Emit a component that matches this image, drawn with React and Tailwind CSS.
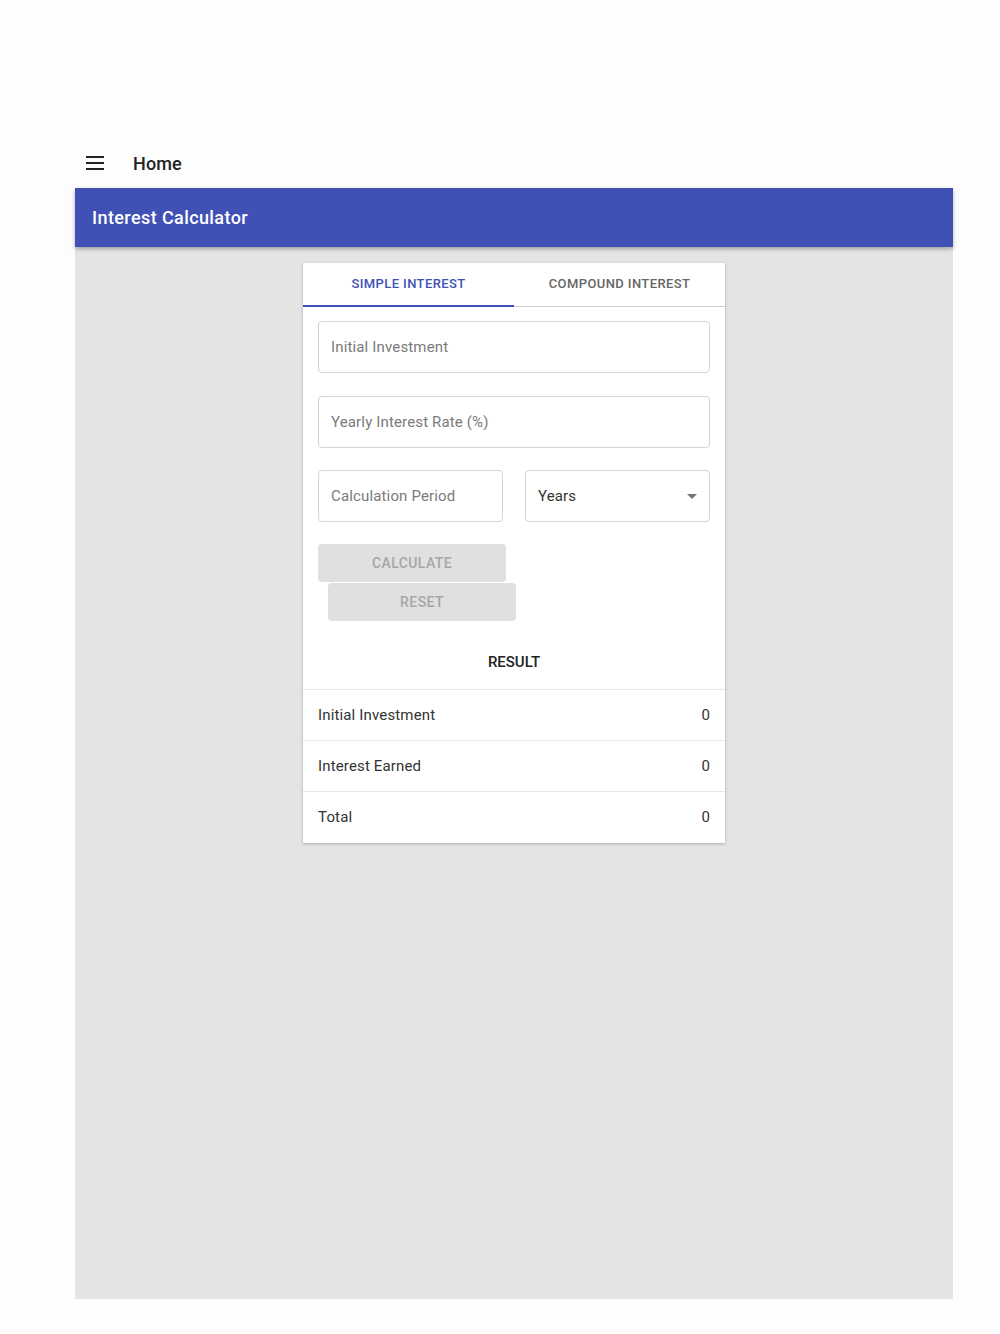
import React, { useState } from 'react';

const rows = [
  { label: 'Initial Investment', value: 0 },
  { label: 'Interest Earned', value: 0 },
  { label: 'Total', value: 0 },
];

const Field = ({ placeholder, className = '' }) => (
  <input
    placeholder={placeholder}
    className={`h-[52px] rounded-[4px] border border-[#d4d4d4] px-[12px] text-[15px] tracking-[0.15px] text-[#333] placeholder:text-[#7a7a7a] outline-none ${className}`}
  />
);

const App = () => {
  const [tab, setTab] = useState(0);

  return (
    <div className="min-h-[1334px] bg-[#fdfdfd] font-['Roboto',sans-serif]">
      <div className="h-[140px]" />
      <div className="flex h-[46px] items-center pl-[86px]">
        <svg width="18" height="14" viewBox="0 0 18 14" className="text-[#222]">
          <rect x="0" y="0" width="18" height="2" fill="currentColor" />
          <rect x="0" y="6" width="18" height="2" fill="currentColor" />
          <rect x="0" y="12" width="18" height="2" fill="currentColor" />
        </svg>
        <span className="ml-[29px] text-[18px] font-medium tracking-[0.15px] text-[#222]">Home</span>
      </div>

      <div className="ml-[75px] mt-[2px] flex h-[1111px] w-[878px] flex-col bg-[#e4e4e4]">
        <div className="relative z-10 flex h-[59px] items-center bg-[#3f51b5] pl-[17px] shadow-[0_2px_4px_rgba(0,0,0,0.3)]">
          <span className="text-[18px] font-medium tracking-[0.4px] text-white">Interest Calculator</span>
        </div>

        <div className="mx-auto mt-[16px] w-[422px] bg-white shadow-[0_1px_3px_rgba(0,0,0,0.25)]">
          <div className="flex border-b border-[#cfcfcf]">
            {['Simple Interest', 'Compound Interest'].map((t, i) => (
              <button
                key={t}
                onClick={() => setTab(i)}
                className={`-mb-px flex h-[44px] flex-1 items-center justify-center border-b-2 text-[13px] font-medium uppercase tracking-[0.4px] ${
                  tab === i ? 'border-[#3f51b5] text-[#3f51b5]' : 'border-transparent text-[#666]'
                }`}
              >
                {t}
              </button>
            ))}
          </div>

          <div className="flex flex-col px-[15px] pt-[14px]">
            <Field placeholder="Initial Investment" className="w-full" />
            <Field placeholder="Yearly Interest Rate (%)" className="mt-[23px] w-full" />
            <div className="mt-[22px] flex gap-[22px]">
              <Field placeholder="Calculation Period" className="w-[185px]" />
              <div className="flex h-[52px] w-[185px] items-center justify-between rounded-[4px] border border-[#d4d4d4] pl-[12px] pr-[12px]">
                <span className="text-[15px] tracking-[0.15px] text-[#333]">Years</span>
                <svg width="10" height="5" viewBox="0 0 10 5">
                  <path d="M0 0 L10 0 L5 5 Z" fill="#757575" />
                </svg>
              </div>
            </div>

            <button className="mt-[22px] h-[38px] w-[188px] rounded-[4px] bg-[#e0e0e0] text-[14px] font-medium uppercase tracking-[0.4px] text-[#a6a6a6]">
              Calculate
            </button>
            <button className="ml-[10px] mt-px h-[38px] w-[188px] rounded-[4px] bg-[#e0e0e0] text-[14px] font-medium uppercase tracking-[0.4px] text-[#a6a6a6]">
              Reset
            </button>
          </div>

          <div className="pb-[17px] pt-[31px] text-center text-[15px] font-medium leading-[20px] text-[#222]">
            RESULT
          </div>

          {rows.map((r, i) => (
            <div
              key={r.label}
              className={`flex items-center justify-between border-t border-[#e6e6e6] px-[15px] text-[15px] tracking-[0.15px] text-[#333] ${
                i === rows.length - 1 ? 'h-[52px]' : 'h-[51px]'
              }`}
            >
              <span>{r.label}</span>
              <span>{r.value}</span>
            </div>
          ))}
        </div>
      </div>
    </div>
  );
};

export default App;
